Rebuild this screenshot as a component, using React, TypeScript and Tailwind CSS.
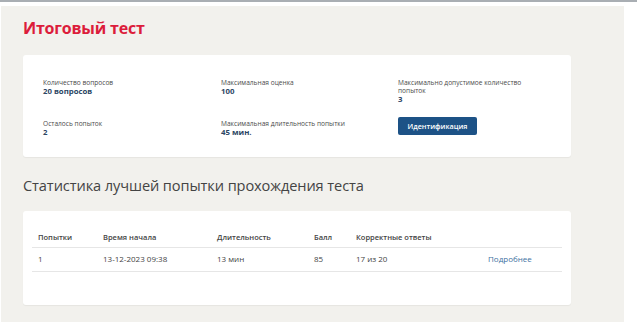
import React from "react";

type Info = {
  label: string;
  value: string;
};

const topRow: Info[] = [
  { label: "Количество вопросов", value: "20 вопросов" },
  { label: "Максимальная оценка", value: "100" },
  { label: "Максимально допустимое количество попыток", value: "3" },
];

const bottomRow: Info[] = [
  { label: "Осталось попыток", value: "2" },
  { label: "Максимальная длительность попытки", value: "45 мин." },
];

const InfoItem = ({ label, value }: Info) => (
  <div>
    <p className="text-[6.6px] text-[#4a4a4a] leading-[8px]">{label}</p>
    <p className="text-[7.8px] font-bold text-[#2c4664] leading-[9px]">{value}</p>
  </div>
);

const App = () => {
  return (
    <div className="w-[637px] h-[332px] bg-white font-['Open_Sans',sans-serif] overflow-hidden">
      <div className="h-[2px] bg-[#a9aeb3]" />
      <div className="w-[623px] h-[316px] mt-[4px] ml-[1px] bg-[#f2f1ed] pl-[22px] pt-[10px]">
        <h1 className="text-[16px] font-bold text-[#dc1d3b] leading-[24px] tracking-[-0.2px]">
          Итоговый тест
        </h1>

        <div className="mt-[15px] w-[548px] h-[102px] bg-white rounded-[3px] shadow-[0_1px_1px_rgba(0,0,0,0.05)] pl-[20px] pt-[24px]">
          <div className="grid grid-cols-[178px_177px_128px]">
            {topRow.map((item, i) => (
              <InfoItem key={i} {...item} />
            ))}
          </div>
          <div className="grid grid-cols-[178px_177px_128px] mt-[16px]">
            {bottomRow.map((item, i) => (
              <InfoItem key={i} {...item} />
            ))}
            <div className="-mt-[9px]">
              <button className="w-[79px] h-[18px] rounded-[2px] bg-[#1d5286] text-white text-[7.2px] font-semibold leading-[18px]">
                Идентификация
              </button>
            </div>
          </div>
        </div>

        <h2 className="mt-[17px] text-[14.6px] text-[#444] leading-[22px] tracking-[-0.1px]">
          Статистика лучшей попытки прохождения теста
        </h2>

        <div className="mt-[15px] w-[548px] h-[94px] bg-white rounded-[3px] shadow-[0_1px_1px_rgba(0,0,0,0.05)] px-[9px] pt-[18px]">
          <table className="w-[530px] text-[8px] text-[#444] border-collapse">
            <thead>
              <tr className="border-b border-[#e6e6e6] h-[18px] text-[7.5px]">
                <th className="text-left font-semibold w-[71px] pl-[6px]">Попытки</th>
                <th className="text-left font-semibold w-[114px]">Время начала</th>
                <th className="text-left font-semibold w-[97px]">Длительность</th>
                <th className="text-left font-semibold w-[42px]">Балл</th>
                <th className="text-left font-semibold w-[132px]">Корректные ответы</th>
                <th />
              </tr>
            </thead>
            <tbody>
              <tr className="border-b border-[#e6e6e6] h-[24px]">
                <td className="pl-[6px]">1</td>
                <td>13-12-2023 09:38</td>
                <td>13 мин</td>
                <td>85</td>
                <td>17 из 20</td>
                <td className="text-[#41709f]">Подробнее</td>
              </tr>
            </tbody>
          </table>
        </div>
      </div>
    </div>
  );
};

export default App;
